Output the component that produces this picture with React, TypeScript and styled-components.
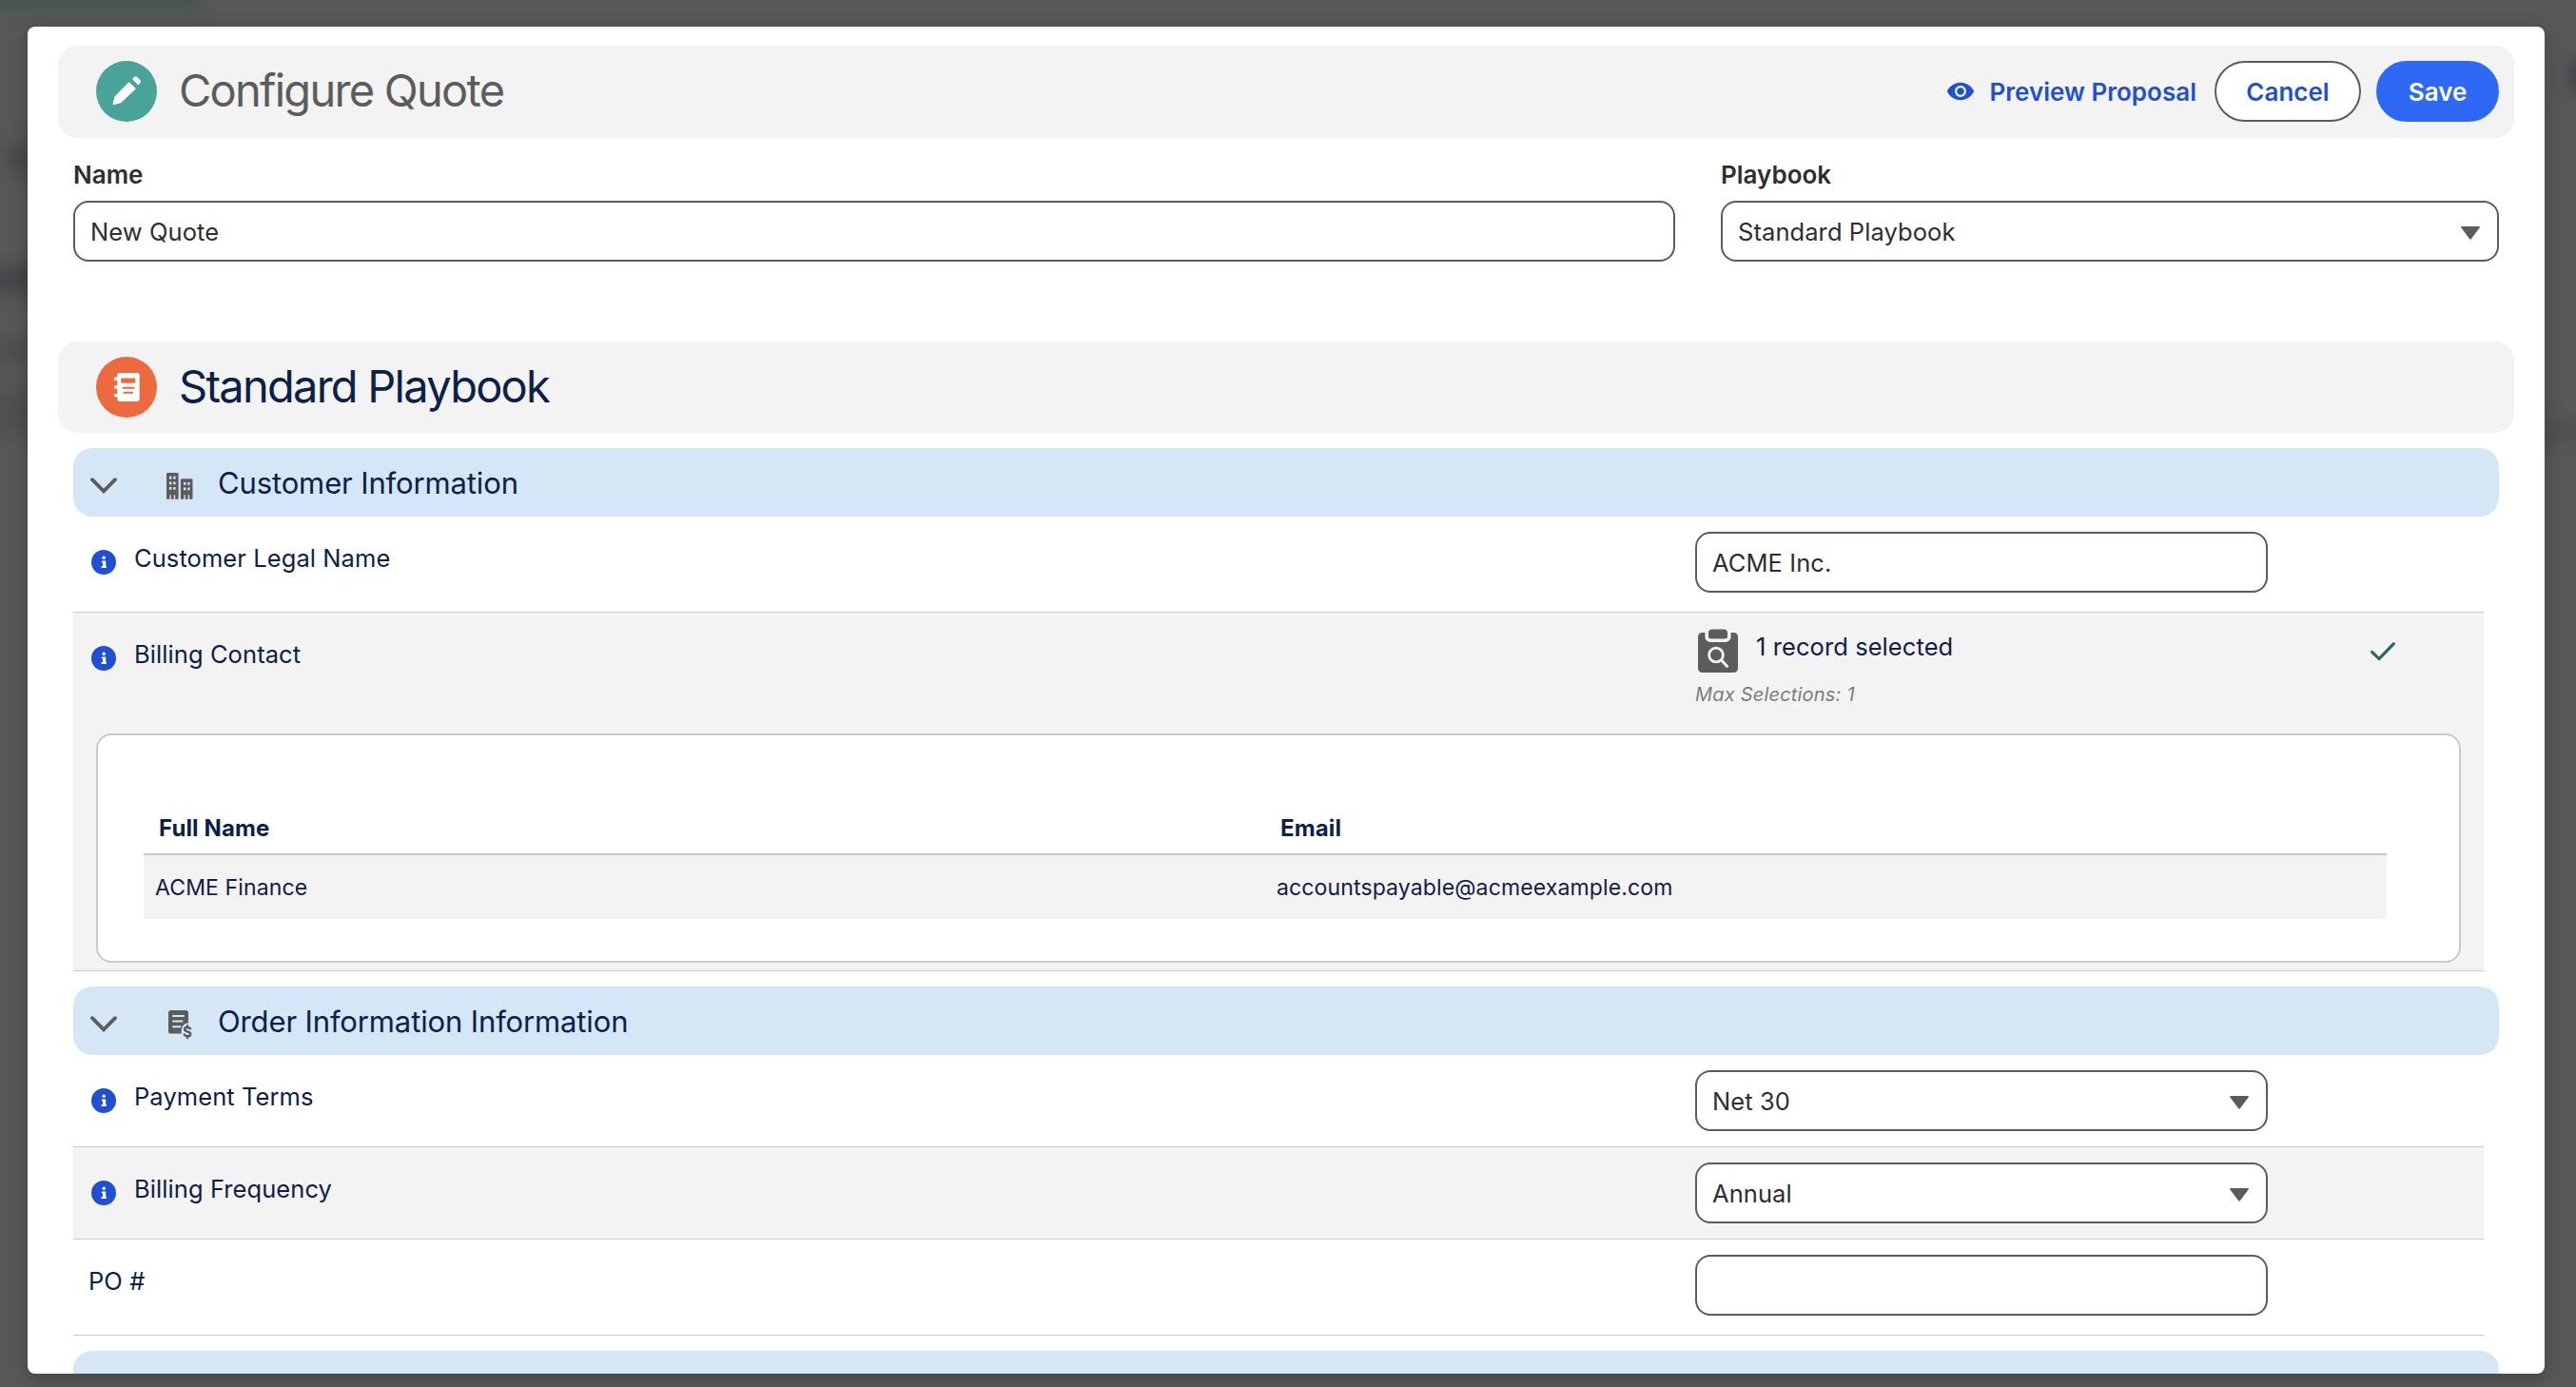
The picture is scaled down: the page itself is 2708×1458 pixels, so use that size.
import { ReactNode, useState } from 'react';
import styled, { createGlobalStyle } from 'styled-components';

const colors = {
  text: '#2e2e2e',
  heading: '#5c5c5c',
  navy: '#0b2149',
  link: '#1f4fd3',
  brand: '#2e69f6',
  border: '#5c5c5c',
  divider: '#c9c9c9',
  muted: '#f3f3f3',
  section: '#d5e6f6',
  icon: '#5c5c5c',
};

const GlobalStyle = createGlobalStyle`
  *, *::before, *::after {
    box-sizing: border-box;
  }

  body {
    margin: 0;
    background: #585858;
    font-family: Inter, 'Liberation Sans', sans-serif;
    font-size: 25.5px;
    letter-spacing: 0.08px;
    color: ${colors.navy};
    -webkit-font-smoothing: antialiased;
  }

  input, button, select {
    font: inherit;
    letter-spacing: inherit;
  }
`;

const Backdrop = styled.div`
  position: relative;
  height: 1458px;
  padding: 28px 33px 14px 29px;
  overflow: hidden;
  background: #585858;
`;

// Blurred remains of the page behind the dialog
const Smudge = styled.div<{ $x: number; $y: number; $w: number; $h: number; $color: string }>`
  position: absolute;
  left: ${({ $x }) => $x}px;
  top: ${({ $y }) => $y}px;
  width: ${({ $w }) => $w}px;
  height: ${({ $h }) => $h}px;
  background: ${({ $color }) => $color};
  filter: blur(9px);
`;

const Modal = styled.div`
  position: relative;
  height: 1416px;
  padding: 20px 32px 0;
  overflow: hidden;
  background: #fff;
  border-radius: 8px;
`;

const ModalShadow = styled.div`
  position: relative;
  border-radius: 8px;
  box-shadow: 0 4px 18px 2px rgba(0, 0, 0, 0.22);
`;

const Header = styled.header<{ $height: number }>`
  display: flex;
  align-items: flex-start;
  height: ${({ $height }) => $height}px;
  padding: 16px 16px 0 40px;
  background: ${colors.muted};
  border-radius: 20px;
`;

const HeaderIcon = styled.div<{ $color: string }>`
  width: 64px;
  height: 64px;
  border-radius: 50%;
  background: ${({ $color }) => $color};

  svg {
    display: block;
  }
`;

const Title = styled.h1<{ $color: string }>`
  flex: 1;
  margin: 0 0 0 23px;
  font-size: 47px;
  font-weight: 420;
  line-height: 61px;
  letter-spacing: -1.74px;
  color: ${({ $color }) => $color};
`;

const Actions = styled.div`
  display: flex;
  align-items: center;
  gap: 16px;
`;

const Button = styled.button<{ $variant?: 'neutral' | 'brand' }>`
  height: 64px;
  width: ${({ $variant }) => ($variant === 'brand' ? 129 : 154)}px;
  padding: 0;
  border: 2px solid ${({ $variant }) => ($variant === 'brand' ? colors.brand : colors.border)};
  border-radius: 32px;
  background: ${({ $variant }) => ($variant === 'brand' ? colors.brand : '#fff')};
  font-size: 26px;
  font-weight: 600;
  letter-spacing: 0;
  color: ${({ $variant }) => ($variant === 'brand' ? '#fff' : colors.link)};
`;

const LinkButton = styled.button`
  display: flex;
  align-items: center;
  padding: 0;
  margin-right: 3px;
  border: 0;
  background: none;
  font-size: 26px;
  font-weight: 600;
  letter-spacing: 0.02px;
  color: ${colors.link};

  svg {
    margin-right: 16px;
  }
`;

const Fields = styled.div`
  display: grid;
  grid-template-columns: 1684px 818px;
  column-gap: 48px;
  margin: 20px 16px 84px;
`;

const FieldLabel = styled.label`
  display: block;
  margin-bottom: 9px;
  font-size: 26px;
  font-weight: 600;
  line-height: 37px;
  letter-spacing: 0;
  color: ${colors.text};
`;

const Input = styled.input`
  display: block;
  width: 100%;
  height: 64px;
  padding: 0 16px;
  border: 2px solid ${colors.border};
  border-radius: 16px;
  background: #fff;
  color: ${colors.text};
  outline: none;
`;

const SelectBox = styled.div`
  display: flex;
  align-items: center;
  justify-content: space-between;
  height: 64px;
  padding: 0 18px 0 16px;
  border: 2px solid ${colors.border};
  border-radius: 16px;
  background: #fff;
  color: ${colors.text};

  svg {
    margin-top: 4px;
  }
`;

const Sections = styled.div`
  margin: 16px 16px 0;
`;

const SectionBar = styled.div`
  display: flex;
  align-items: center;
  height: 72px;
  margin-top: 16px;
  padding-left: 18px;
  border-radius: 20px;
  background: ${colors.section};

  svg {
    margin-top: 8px;
  }
`;

const SectionIcon = styled.div`
  display: flex;
  width: 54px;
  margin-left: 52px;
`;

const SectionTitle = styled.h2`
  margin: 1px 0 0;
  font-size: 31px;
  font-weight: 400;
  line-height: 40px;
  letter-spacing: -0.13px;
`;

const Row = styled.div<{ $shaded?: boolean; $bottom?: number }>`
  margin-right: 16px;
  padding-bottom: ${({ $bottom = 16 }) => $bottom}px;
  border-bottom: 1px solid ${colors.divider};
  background: ${({ $shaded }) => ($shaded ? colors.muted : '#fff')};
`;

const RowMain = styled.div`
  display: grid;
  grid-template-columns: 1705px 602px 1fr;
  padding-top: 16px;
`;

const RowLabel = styled.div`
  display: flex;
  padding: 10px 0 0 16px;
  line-height: 35px;

  svg {
    flex: none;
    margin: 9px 19px 0 3px;
  }
`;

const Lookup = styled.div`
  height: 111px;
`;

const LookupCount = styled.div`
  display: flex;
  height: 46px;
  line-height: 39px;

  svg {
    margin: 1px 19px 0 3px;
  }
`;

const LookupHint = styled.div`
  margin-top: 11px;
  font-size: 20px;
  font-style: italic;
  line-height: 26px;
  letter-spacing: 0.2px;
  color: #7c7c7c;
`;

const RowStatus = styled.div`
  padding: 11px 0 0 107px;
`;

const Card = styled.div`
  height: 241px;
  margin: 0 24px 0;
  padding: 71px 76px 0 48px;
  border: 2px solid ${colors.divider};
  border-radius: 16px;
  background: #fff;
`;

const Table = styled.table`
  width: 100%;
  border-collapse: separate;
  border-spacing: 0;
  table-layout: fixed;
`;

const Th = styled.th`
  height: 53px;
  padding: 0 16px;
  text-align: left;
  font-size: 24px;
  font-weight: 700;
  letter-spacing: 0.12px;
`;

const Td = styled.td`
  height: 69px;
  padding: 0 12px;
  border-top: 2px solid ${colors.divider};
  background: ${colors.muted};
  font-size: 23px;
  letter-spacing: 0.13px;
`;

const PencilIcon = () => (
  <svg width="64" height="64" viewBox="0 0 64 64" fill="#fff" stroke="#fff" strokeLinejoin="round">
    <path d="M34.7 22.9 41 29.2 25.6 43.7 18.1 45.6 20 38z" strokeWidth="1.2" />
    <path d="M38.8 19 40.8 17.2Q41.7 16.6 42.6 17.3L46 20.7Q46.8 21.6 46 22.5L44.2 24.5z" strokeWidth="1.2" />
  </svg>
);

const PlaybookIcon = () => (
  <svg width="64" height="64" viewBox="0 0 64 64" fill="none">
    <rect x="22.3" y="17" width="23.4" height="30" rx="2.4" fill="#fff" />
    <path d="M20.4 23.3h4M20.4 31.9h4M20.4 40.6h4" stroke="#fff" strokeWidth="3.4" strokeLinecap="round" />
    <path d="M26.3 22.5h14.9v5.2H26.3z" fill="#ed6a40" />
    <path d="M28.4 32.7h11.4M29.4 37.7h8.7" stroke="#ed6a40" strokeWidth="1.9" strokeLinecap="round" />
  </svg>
);

const EyeIcon = () => (
  <svg width="28" height="28" viewBox="0 0 52 52" fill={colors.link}>
    <path
      fillRule="evenodd"
      d="M51.8 25.1C47.1 15.6 37.3 9 26 9S4.9 15.6.2 25.1c-.3.6-.3 1.3 0 1.8C4.9 36.4 14.7 43 26 43s21.1-6.6 25.8-16.1c.3-.6.3-1.2 0-1.8zM26 37c-6.1 0-11-4.9-11-11s4.9-11 11-11 11 4.9 11 11-4.9 11-11 11zm0-18c-3.9 0-7 3.1-7 7s3.1 7 7 7 7-3.1 7-7-3.1-7-7-7z"
    />
  </svg>
);

const TriangleIcon = () => (
  <svg width="20" height="14" viewBox="0 0 20 14" fill={colors.icon}>
    <path d="M.8 0h18.4c.7 0 1 .7.6 1.2L10.8 13.2c-.4.5-1.2.5-1.6 0L.2 1.2C-.2.7.1 0 .8 0z" />
  </svg>
);

const ChevronIcon = () => (
  <svg width="28" height="28" viewBox="0 0 28 28" fill="none">
    <path
      d="M2 7.2 14 19.4 26 7.2"
      stroke={colors.icon}
      strokeWidth="3.8"
      strokeLinecap="round"
    />
  </svg>
);

const BuildingsIcon = () => (
  <svg width="28" height="28" viewBox="0 0 28 28" fill={colors.icon}>
    <path
      fillRule="evenodd"
      d="M1.3 0h10c.7 0 1.3.6 1.3 1.3V27c0 .4-.3.7-.7.7H9.2V23.2H7.8v4.5H4.8v-4.5H3.4v4.5H.7c-.4 0-.7-.3-.7-.7V1.3C0 .6.6 0 1.3 0zM3 3.7v2.8h2.4V3.7zm4.2 0v2.8h2.4V3.7zM3 9.4v2.8h2.4V9.4zm4.2 0v2.8h2.4V9.4zM3 15v2.8h2.4V15zm4.2 0v2.8h2.4V15z"
    />
    <path
      fillRule="evenodd"
      d="M16.2 6.2h10c.7 0 1.3.6 1.3 1.3V27c0 .4-.3.7-.7.7h-2.7v-4.5h-1.4v4.5h-3v-4.5h-1.4v4.5h-2.7c-.4 0-.7-.3-.7-.7V7.5c0-.7.6-1.3 1.3-1.3zM18 9.9v2.8h2.4V9.9zm4.2 0v2.8h2.4V9.9zM18 15.4v2.8h2.4v-2.8zm4.2 0v2.8h2.4v-2.8z"
    />
  </svg>
);

const OrderIcon = () => (
  <svg width="28" height="32" viewBox="0 0 28 32">
    <rect x="2" y="1" width="21" height="24.5" rx="2.6" fill={colors.icon} />
    <path
      d="M7 7h11M7 12.6h9.5M7 18.2h7.5"
      stroke={colors.section}
      strokeWidth="2"
      strokeLinecap="round"
    />
    <ellipse cx="22" cy="23.4" rx="6.4" ry="8.8" fill={colors.section} />
    <g fill="none" stroke={colors.icon} strokeWidth="2.5" strokeLinecap="round">
      <path d="M25 20.3c-.7-1-1.8-1.4-3-1.4-1.7 0-2.9.9-2.9 2.2 0 3 6.1 1.6 6.1 4.8 0 1.4-1.3 2.3-3.1 2.3-1.4 0-2.6-.5-3.3-1.6" />
      <path d="M22 17.3v1.4M22 28.4v1.5" />
    </g>
  </svg>
);

const InfoIcon = () => (
  <svg width="26" height="26" viewBox="0 0 26 26">
    <circle cx="13" cy="13" r="13" fill={colors.link} />
    <circle cx="13.2" cy="8.2" r="1.7" fill="#fff" />
    <path d="M11 12.4h3.2v5.2M10.6 17.9h5.2" stroke="#fff" strokeWidth="2" fill="none" />
    <path d="M12 12h2.4v6H12z" fill="#fff" />
  </svg>
);

const ClipboardSearchIcon = () => (
  <svg width="42" height="46" viewBox="0 0 42 46" fill="none">
    <rect y="4" width="42" height="42" rx="4.6" fill={colors.icon} />
    <path d="M7.4 2v6.4a5.6 5.6 0 0 0 5.6 5.6h16a5.6 5.6 0 0 0 5.6-5.6V2z" fill={colors.muted} />
    <rect x="11" y=".6" width="20" height="9.6" rx="4" fill={colors.icon} />
    <path d="M11 6h20v2.6a1.6 1.6 0 0 1-1.6 1.6H12.6A1.6 1.6 0 0 1 11 8.6z" fill={colors.icon} />
    <circle cx="19" cy="27.5" r="7.4" stroke={colors.muted} strokeWidth="2.8" />
    <path d="m24.6 33 5.9 6.3" stroke={colors.muted} strokeWidth="3" strokeLinecap="round" />
  </svg>
);

const CheckIcon = () => (
  <svg width="28" height="22" viewBox="0 0 28 22" fill="none">
    <path d="m2.6 11.4 7.4 7.2L25.4 2.6" stroke="#2b6664" strokeWidth="3.2" strokeLinecap="round" />
  </svg>
);

interface SelectProps {
  value: string;
}

function Select({ value }: SelectProps) {
  return (
    <SelectBox role="combobox">
      {value}
      <TriangleIcon />
    </SelectBox>
  );
}

interface SectionProps {
  title?: string;
  icon?: ReactNode;
  children?: ReactNode;
}

function Section({ title, icon, children }: SectionProps) {
  return (
    <section>
      <SectionBar>
        {title && (
          <>
            <ChevronIcon />
            <SectionIcon>{icon}</SectionIcon>
            <SectionTitle>{title}</SectionTitle>
          </>
        )}
      </SectionBar>
      {children}
    </section>
  );
}

interface QuestionProps {
  label: string;
  info?: boolean;
  shaded?: boolean;
  bottom?: number;
  status?: ReactNode;
  details?: ReactNode;
  children: ReactNode;
}

function Question({ label, info = true, shaded, bottom, status, details, children }: QuestionProps) {
  return (
    <Row $shaded={shaded} $bottom={bottom}>
      <RowMain>
        <RowLabel>
          {info && <InfoIcon />}
          {label}
        </RowLabel>
        {children}
        {status && <RowStatus>{status}</RowStatus>}
      </RowMain>
      {details}
    </Row>
  );
}

const contacts = [{ id: 1, name: 'ACME Finance', email: 'accountspayable@acmeexample.com' }];

export default function App() {
  const [name, setName] = useState('New Quote');
  const [legalName, setLegalName] = useState('ACME Inc.');
  const [poNumber, setPoNumber] = useState('');

  return (
    <>
      <GlobalStyle />
      <Backdrop>
        <Smudge $x={-20} $y={-20} $w={230} $h={30} $color="#455551" />
        <Smudge $x={6} $y={150} $w={60} $h={34} $color="#484a4e" />
        <Smudge $x={-20} $y={280} $w={80} $h={28} $color="#434549" />
        <Smudge $x={-20} $y={360} $w={80} $h={16} $color="#4b4b4b" />
        <Smudge $x={-20} $y={410} $w={80} $h={46} $color="#514f4e" />
        <Smudge $x={2702} $y={62} $w={30} $h={36} $color="#3f4247" />
        <Smudge $x={2670} $y={444} $w={60} $h={18} $color="#4d4d50" />
        <ModalShadow>
          <Modal role="dialog">
            <Header $height={97}>
              <HeaderIcon $color="#4aa399">
                <PencilIcon />
              </HeaderIcon>
              <Title $color={colors.heading}>Configure Quote</Title>
              <Actions>
                <LinkButton>
                  <EyeIcon />
                  Preview Proposal
                </LinkButton>
                <Button $variant="neutral">Cancel</Button>
                <Button $variant="brand">Save</Button>
              </Actions>
            </Header>

            <Fields>
              <div>
                <FieldLabel>Name</FieldLabel>
                <Input value={name} onChange={(e) => setName(e.target.value)} />
              </div>
              <div>
                <FieldLabel>Playbook</FieldLabel>
                <Select value="Standard Playbook" />
              </div>
            </Fields>

            <Header $height={96}>
              <HeaderIcon $color="#ed6a40">
                <PlaybookIcon />
              </HeaderIcon>
              <Title as="h2" $color={colors.navy}>
                Standard Playbook
              </Title>
            </Header>

            <Sections>
              <Section title="Customer Information" icon={<BuildingsIcon />}>
                <Question label="Customer Legal Name" bottom={20}>
                  <Input value={legalName} onChange={(e) => setLegalName(e.target.value)} />
                </Question>
                <Question
                  label="Billing Contact"
                  shaded
                  bottom={8}
                  status={<CheckIcon />}
                  details={
                    <Card>
                      <Table>
                        <thead>
                          <tr>
                            <Th>Full Name</Th>
                            <Th>Email</Th>
                          </tr>
                        </thead>
                        <tbody>
                          {contacts.map((contact) => (
                            <tr key={contact.id}>
                              <Td>{contact.name}</Td>
                              <Td>{contact.email}</Td>
                            </tr>
                          ))}
                        </tbody>
                      </Table>
                    </Card>
                  }
                >
                  <Lookup>
                    <LookupCount>
                      <ClipboardSearchIcon />
                      1 record selected
                    </LookupCount>
                    <LookupHint>Max Selections: 1</LookupHint>
                  </Lookup>
                </Question>
              </Section>

              <Section title="Order Information Information" icon={<OrderIcon />}>
                <Question label="Payment Terms">
                  <Select value="Net 30" />
                </Question>
                <Question label="Billing Frequency" shaded>
                  <Select value="Annual" />
                </Question>
                <Question label="PO #" info={false} bottom={20}>
                  <Input value={poNumber} onChange={(e) => setPoNumber(e.target.value)} />
                </Question>
              </Section>

              <Section />
            </Sections>
          </Modal>
        </ModalShadow>
      </Backdrop>
    </>
  );
}
